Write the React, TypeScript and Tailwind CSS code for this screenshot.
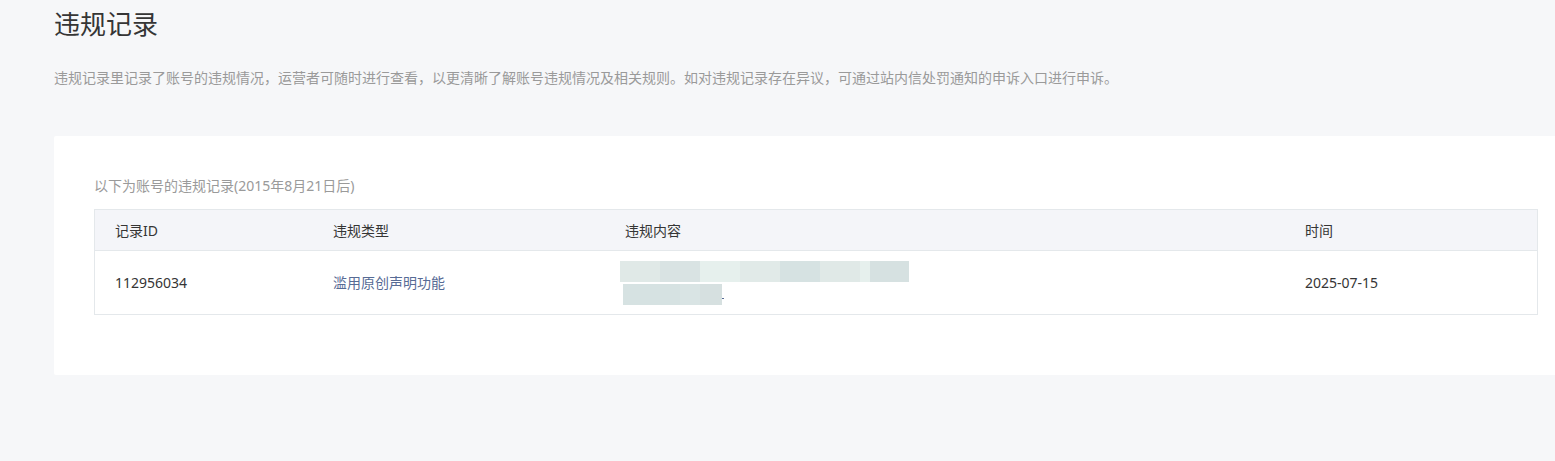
const font = { fontFamily: '"Noto Sans", "Noto Sans CJK SC", sans-serif' };

const blurLine1 = [
  { w: 40, c: "bg-[#e0e9e7]" },
  { w: 40, c: "bg-[#d9e3e3]" },
  { w: 40, c: "bg-[#e6f0ed]" },
  { w: 40, c: "bg-[#e1eae8]" },
  { w: 40, c: "bg-[#d6e2e2]" },
  { w: 40, c: "bg-[#e0e9e7]" },
  { w: 10, c: "bg-[#e6f0ed]" },
  { w: 39, c: "bg-[#d6e1e1]" },
];

const blurLine2 = [
  { w: 57, c: "bg-[#d6e2e2]" },
  { w: 20, c: "bg-[#d9e4e4]" },
  { w: 22, c: "bg-[#d6e0e0]" },
];

const BlurredContent = () => (
  <div className="flex flex-col gap-[2px] -ml-[5px]">
    <div className="flex h-[21px]">
      {blurLine1.map((b, i) => (
        <div key={i} className={b.c} style={{ width: b.w }} />
      ))}
    </div>
    <div className="flex h-[21px] items-end pl-[3px]">
      {blurLine2.map((b, i) => (
        <div key={i} className={`h-[21px] ${b.c}`} style={{ width: b.w }} />
      ))}
      <div className="mb-[6px] h-[1px] w-[2px] bg-[#576b95]" />
    </div>
  </div>
);

export default function App() {
  return (
    <div className="min-h-screen overflow-hidden bg-[#f6f7f9]" style={font}>
      <div className="pl-[54px] pt-[6px]">
        <h1 className="text-[26px] leading-[36px] font-normal text-[#353535]">违规记录</h1>
        <p className="mt-[26px] text-[14px] leading-[20px] text-[#9a9a9a] whitespace-nowrap">
          违规记录里记录了账号的违规情况，运营者可随时进行查看，以更清晰了解账号违规情况及相关规则。如对违规记录存在异议，可通过站内信处罚通知的申诉入口进行申诉。
        </p>

        <div className="mt-[48px] w-[1524px] rounded-[2px] bg-white px-[40px] pt-[40px] pb-[60px]">
          <p className="text-[14px] leading-[20px] text-[#9a9a9a]">以下为账号的违规记录(2015年8月21日后)</p>

          <div className="mt-[13px] border border-[#e4e8eb] text-[14px] text-[#353535]">
            <div className="grid h-[41px] grid-cols-[218px_292px_680px_1fr] items-center border-b border-[#e4e8eb] bg-[#f4f5f9]">
              <div className="pl-[20px]">记录ID</div>
              <div className="pl-[20px]">违规类型</div>
              <div className="pl-[20px]">违规内容</div>
              <div className="pl-[20px]">时间</div>
            </div>
            <div className="grid h-[63px] grid-cols-[218px_292px_680px_1fr] items-center">
              <div className="pl-[20px]">112956034</div>
              <div className="pl-[20px] text-[#576b95]">滥用原创声明功能</div>
              <div className="pl-[20px]">
                <BlurredContent />
              </div>
              <div className="pl-[20px]">2025-07-15</div>
            </div>
          </div>
        </div>
      </div>
    </div>
  );
}
